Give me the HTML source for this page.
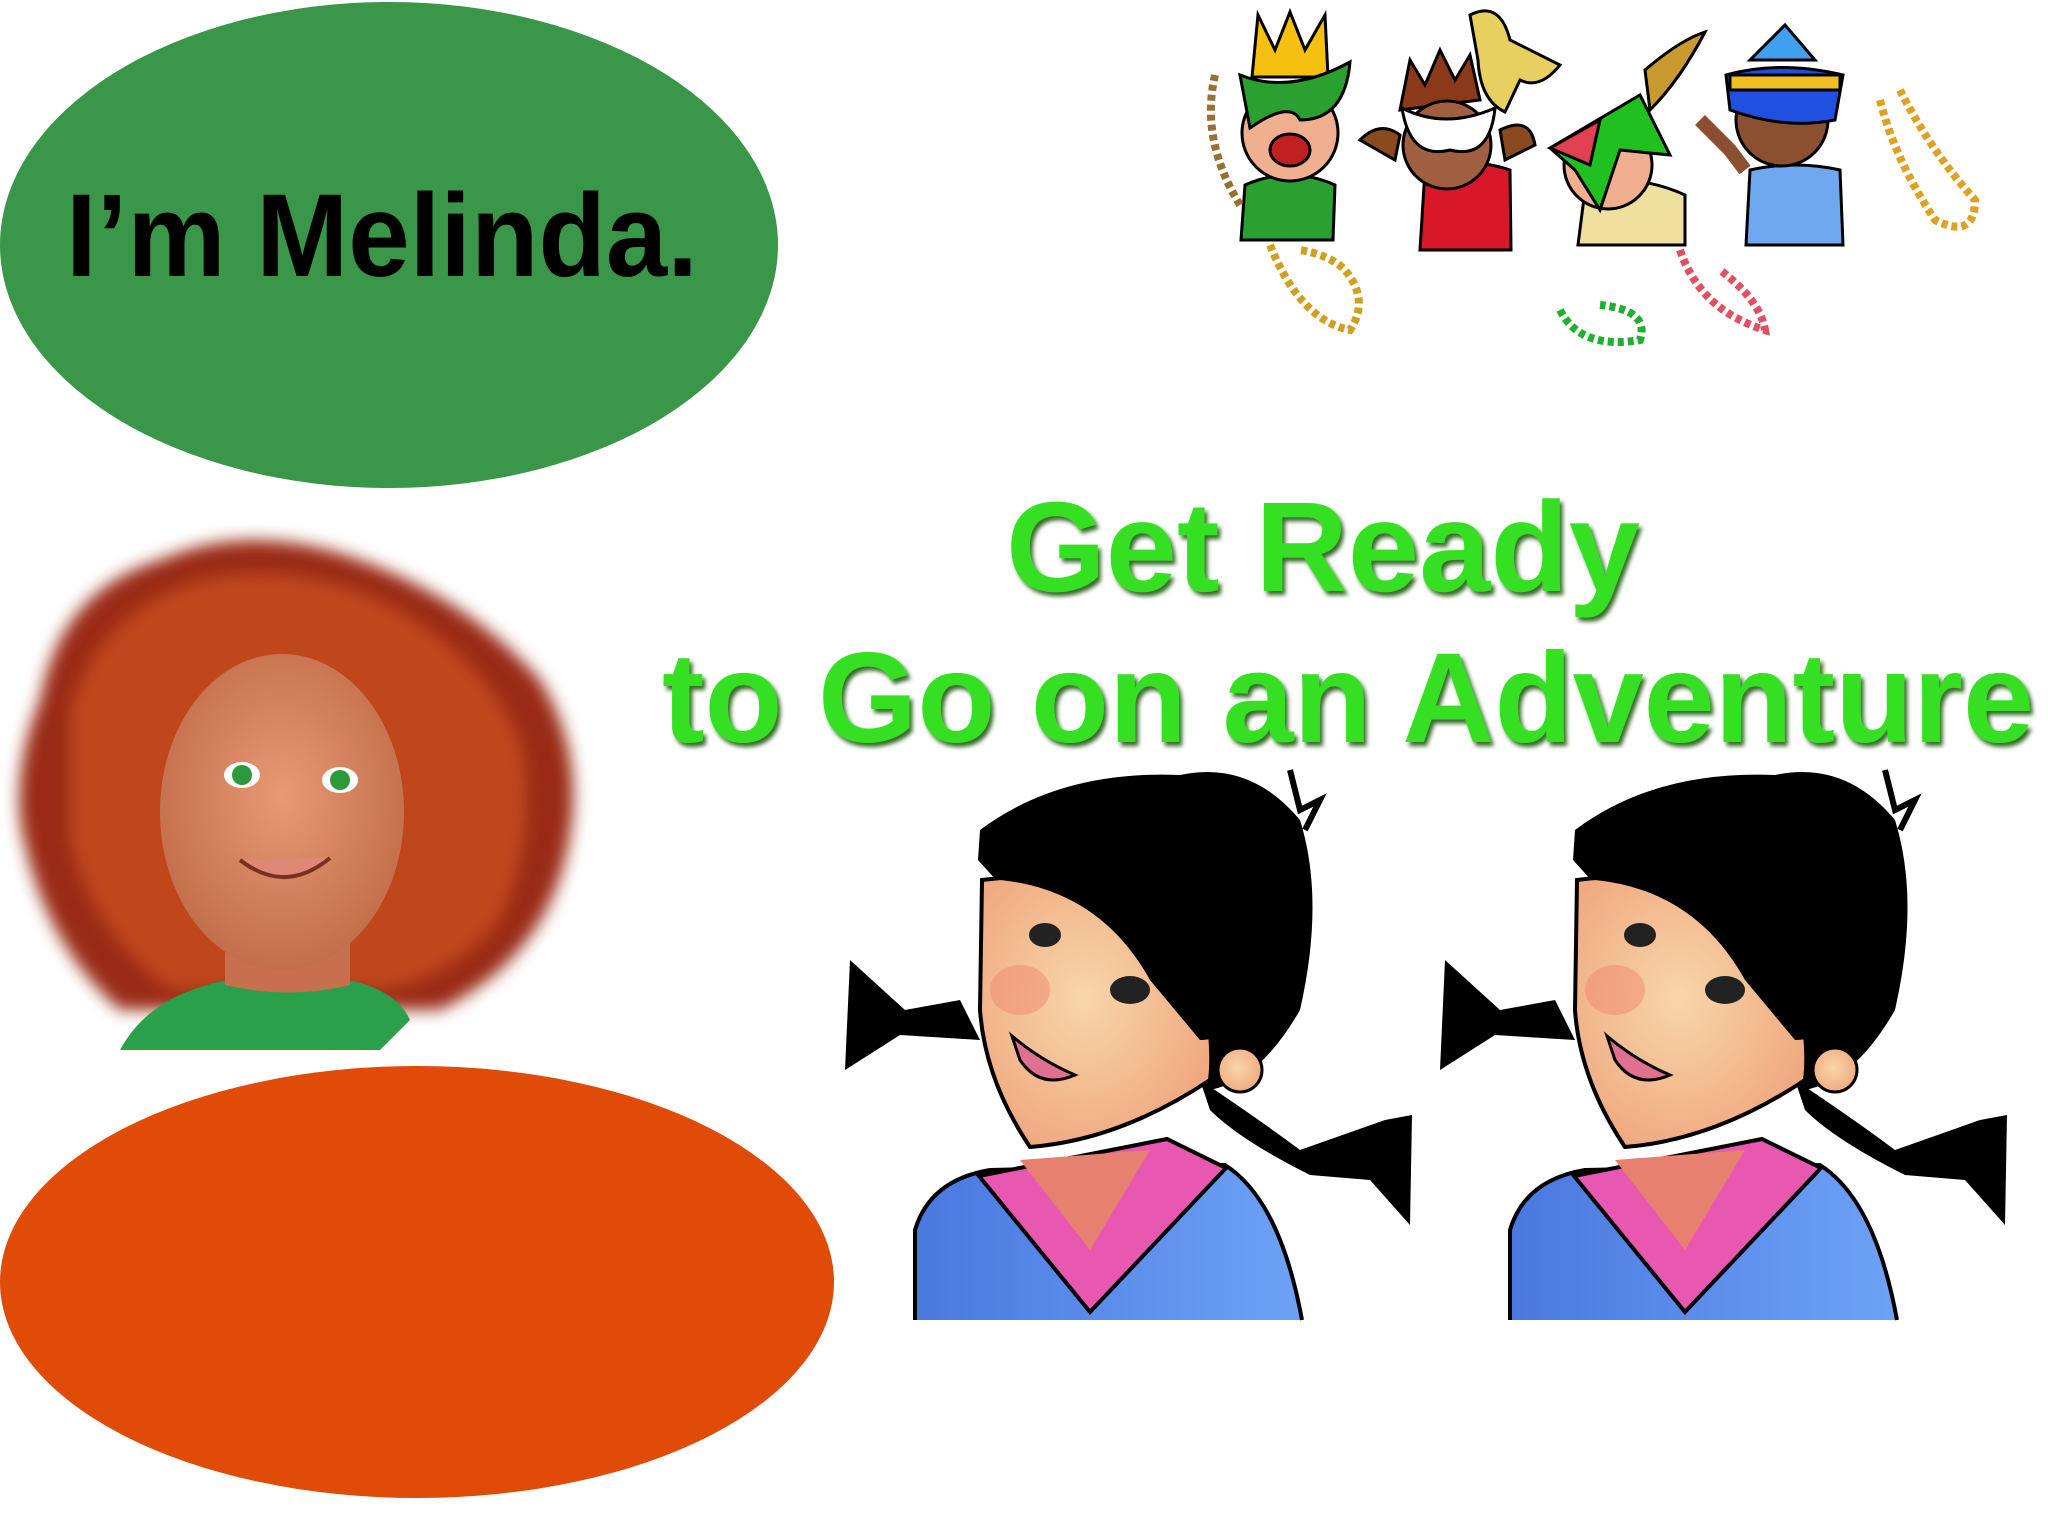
<!DOCTYPE html>
<html><head><meta charset="utf-8"><style>
html,body{margin:0;padding:0;background:#fff;width:2048px;height:1536px;overflow:hidden}
svg{display:block}
</style></head><body>
<svg width="2048" height="1536" viewBox="0 0 2048 1536" xmlns="http://www.w3.org/2000/svg">
<defs>
<filter id="blur"><feGaussianBlur stdDeviation="8"/></filter>
<filter id="sh"><feDropShadow dx="3" dy="4" stdDeviation="2" flood-color="#1a5a10" flood-opacity="0.9"/></filter>
<radialGradient id="skin" cx="0.45" cy="0.45" r="0.6"><stop offset="0" stop-color="#f8d6a8"/><stop offset="1" stop-color="#f0a880"/></radialGradient>
<linearGradient id="blue" x1="0" x2="1"><stop offset="0" stop-color="#4a78e0"/><stop offset="1" stop-color="#6ea2f5"/></linearGradient>
<radialGradient id="rface" cx="0.5" cy="0.45" r="0.6"><stop offset="0" stop-color="#e89a74"/><stop offset="1" stop-color="#c06a48"/></radialGradient>
</defs>

<ellipse cx="389" cy="245" rx="389" ry="243" fill="#3a9648"/>
<text x="66" y="276" font-family="Liberation Sans, sans-serif" font-weight="bold" font-size="118" fill="#000" textLength="632" lengthAdjust="spacingAndGlyphs">I’m Melinda.</text>

<ellipse cx="417" cy="1282" rx="417" ry="216" fill="#e04c08"/>

<!-- red-haired girl -->
<g>
<path d="M40 700 Q60 590 160 560 Q250 520 360 560 Q470 600 540 680 Q590 760 565 860 Q540 960 440 1010 L120 1010 Q40 940 20 820 Q15 760 40 700 Z" fill="#9a2c14" filter="url(#blur)"/>
<path d="M70 710 Q100 610 200 580 Q290 560 380 600 Q480 650 520 740 Q540 830 500 920 Q450 980 380 990 L170 990 Q90 930 70 840 Z" fill="#c0461e" filter="url(#blur)"/>
<path d="M120 1050 Q160 975 290 975 Q390 975 410 1020 L380 1050 Z" fill="#2aa04a"/>
<path d="M225 940 L225 985 Q290 1000 350 985 L350 930 Z" fill="#c8704e"/>
<ellipse cx="282" cy="812" rx="122" ry="158" fill="url(#rface)"/>
<ellipse cx="242" cy="775" rx="18" ry="13" fill="#fff"/><circle cx="242" cy="775" r="10" fill="#2a9a3a"/>
<ellipse cx="340" cy="780" rx="18" ry="13" fill="#fff"/><circle cx="340" cy="780" r="10" fill="#2a9a3a"/>
<path d="M240 860 Q285 895 330 858" stroke="#7a3020" stroke-width="4" fill="#e08878"/>
</g>

<g font-family="Liberation Sans, sans-serif" font-weight="bold" fill="#36e020" filter="url(#sh)">
<text x="1006" y="591" font-size="128" textLength="634" lengthAdjust="spacingAndGlyphs">Get Ready</text>
<text x="662" y="742" font-size="128" textLength="1372" lengthAdjust="spacingAndGlyphs">to Go on an Adventure</text>
</g>

<g id="girl">
<path d="M850 960 L905 1010 L960 1000 L980 1040 L900 1035 L845 1070 Z" fill="#000"/>
<path d="M1200 1080 Q1260 1120 1300 1150 L1385 1120 L1412 1115 L1410 1225 L1370 1180 L1310 1175 Q1240 1140 1210 1110 Z" fill="#000"/>
<path d="M915 1320 L915 1230 Q930 1180 990 1170 L1225 1165 Q1280 1200 1302 1320" fill="url(#blue)" stroke="#000" stroke-width="4"/>
<path d="M979 1176 L1167 1139 L1226 1168 L1090 1312 Z" fill="#e858b0" stroke="#000" stroke-width="4"/>
<path d="M1020 1160 L1150 1150 L1090 1250 Z" fill="#e88070"/>
<path d="M978 860 L980 830 Q1060 770 1180 775 Q1250 760 1300 820 Q1325 900 1300 1010 Q1260 1080 1210 1090 L1150 1050 Z" fill="#000"/>
<path d="M1290 770 L1300 810 L1320 800 L1305 830" stroke="#000" stroke-width="6" fill="none"/>
<path d="M982 880 Q1060 870 1120 890 L1200 970 Q1215 1040 1210 1080 Q1120 1140 1030 1147 Q985 1080 980 1010 Z" fill="url(#skin)" stroke="#000" stroke-width="4"/>
<ellipse cx="1020" cy="990" rx="30" ry="25" fill="#f08870" opacity="0.5"/>
<path d="M980 860 Q1080 820 1190 870 L1220 990 Q1240 1040 1200 1040 L1150 980 Q1100 890 1000 880 Z" fill="#000"/>
<ellipse cx="1045" cy="935" rx="16" ry="12" fill="#222"/>
<ellipse cx="1130" cy="990" rx="20" ry="14" fill="#222"/>
<circle cx="1240" cy="1070" r="22" fill="url(#skin)" stroke="#000" stroke-width="3"/>
<path d="M1012 1036 Q1040 1060 1075 1075 Q1040 1090 1020 1060 Z" fill="#e07090" stroke="#000" stroke-width="3"/>
</g>
<use href="#girl" x="595" y="0"/>

<g stroke="#000" stroke-width="3">
<path d="M1241 240 L1245 185 Q1290 165 1335 185 L1333 240 Z" fill="#2aa030"/>
<circle cx="1290" cy="133" r="48" fill="#f0b090"/>
<path d="M1252 77 L1258 15 L1275 50 L1290 12 L1305 50 L1325 15 L1328 77 Z" fill="#f5c010"/>
<path d="M1240 75 Q1290 95 1350 62 Q1345 120 1300 120 Q1290 100 1250 128 Z" fill="#2aa030"/>
<ellipse cx="1290" cy="150" rx="20" ry="16" fill="#c02020"/>
<path d="M1215 75 Q1200 140 1240 205" stroke="#9a7030" stroke-width="8" stroke-dasharray="6 4" fill="none"/>
<path d="M1270 245 Q1300 320 1350 330 Q1370 300 1345 270 Q1330 255 1300 250" stroke="#d0a020" stroke-width="8" stroke-dasharray="6 4" fill="none"/>
<path d="M1420 250 L1425 170 Q1465 155 1510 170 L1511 250 Z" fill="#d81828"/>
<path d="M1400 110 L1410 60 L1425 85 L1440 50 L1455 80 L1470 55 L1480 100 Z" fill="#8a3a1a"/>
<circle cx="1447" cy="145" r="44" fill="#a06040"/>
<path d="M1402 108 Q1445 130 1495 108 Q1490 160 1450 150 Q1410 160 1402 108 Z" fill="#fff"/>
<path d="M1470 15 Q1500 0 1510 40 L1560 65 Q1540 90 1520 80 L1505 112 Q1480 100 1478 60 Z" fill="#e8d060"/>
<path d="M1360 140 Q1380 120 1400 135 L1395 160 Z" fill="#8a4a20"/>
<path d="M1500 130 Q1530 115 1535 145 L1505 160 Z" fill="#8a4a20"/>
<path d="M1578 245 L1585 190 Q1630 170 1685 195 L1685 245 Z" fill="#f0e0a0"/>
<circle cx="1608" cy="165" r="44" fill="#f0b090"/>
<path d="M1550 148 L1640 95 L1670 155 L1620 150 L1600 210 L1575 170 Z" fill="#20c020"/>
<path d="M1550 148 L1600 120 L1590 165 Z" fill="#e04050"/>
<path d="M1645 70 Q1680 40 1705 32 Q1680 80 1650 110 Z" fill="#c89a30"/>
<path d="M1560 310 Q1580 350 1640 340 Q1650 310 1600 305" stroke="#20b030" stroke-width="8" stroke-dasharray="6 4" fill="none"/>
<path d="M1680 250 Q1700 310 1765 330 Q1760 300 1720 270" stroke="#e05060" stroke-width="8" stroke-dasharray="6 4" fill="none"/>
<path d="M1746 245 L1750 170 Q1795 160 1840 170 L1843 245 Z" fill="#70a8f0"/>
<circle cx="1782" cy="120" r="46" fill="#8a5030"/>
<path d="M1726 75 Q1780 60 1843 75 L1835 120 Q1785 130 1730 110 Z" fill="#2050e0"/>
<path d="M1750 60 L1785 25 L1815 60 Z" fill="#40a0f0"/>
<path d="M1730 75 L1840 75 L1840 90 L1730 90 Z" fill="#f0c020"/>
<path d="M1700 120 L1730 150 L1745 170" stroke="#8a5030" stroke-width="14" fill="none"/>
<path d="M1880 100 Q1895 160 1935 220 Q1975 240 1975 200 Q1930 150 1900 90" stroke="#e0a020" stroke-width="8" stroke-dasharray="6 4" fill="none"/>
</g>
</svg>
</body></html>
